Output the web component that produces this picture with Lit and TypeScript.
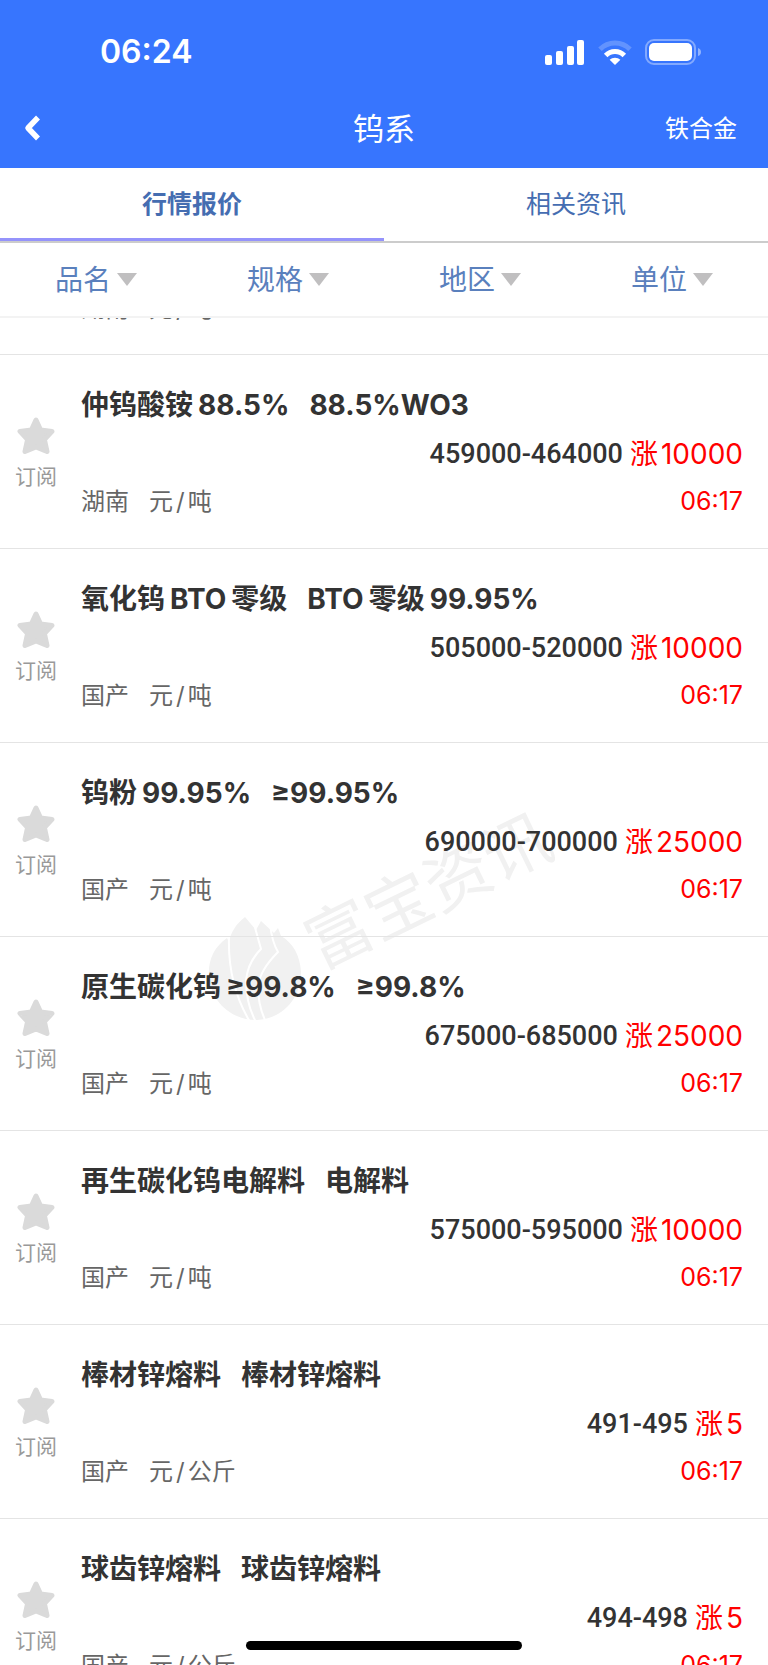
import { LitElement, html, svg, css } from "lit";
import { customElement, property } from "lit/decorators.js";

interface Quote {
  name: string[];
  spec: string[];
  price: string;
  amount: string;
  region: string;
  unit: string;
  time: string;
}

const quote = (name: string[], spec: string[], price: string, amount: string, region: string, unit: string): Quote =>
  ({ name, spec, price, amount, region, unit, time: "06:17" });

const QUOTES: Quote[] = [
  quote(["仲钨酸铵", "88.5%"], ["88.5%WO3"], "459000-464000", "10000", "湖南", "吨"),
  quote(["氧化钨", "BTO", "零级"], ["BTO", "零级", "99.95%"], "505000-520000", "10000", "国产", "吨"),
  quote(["钨粉", "99.95%"], ["≥99.95%"], "690000-700000", "25000", "国产", "吨"),
  quote(["原生碳化钨", "≥99.8%"], ["≥99.8%"], "675000-685000", "25000", "国产", "吨"),
  quote(["再生碳化钨电解料"], ["电解料"], "575000-595000", "10000", "国产", "吨"),
  quote(["棒材锌熔料"], ["棒材锌熔料"], "491-495", "5", "国产", "公斤"),
  quote(["球齿锌熔料"], ["球齿锌熔料"], "494-498", "5", "国产", "公斤"),
];

const metaStyles = css`
  .meta { display: flex; align-items: baseline; gap: 20px; font-size: 24px; line-height: 34px; color: #666; }
  .slash { margin: 0 3px; }
`;

const place = (region: string, unit: string) =>
  html`<span>${region}</span><span>元<span class="slash">/</span>${unit}</span>`;

@customElement("quote-row")
export class QuoteRow extends LitElement {
  @property({ attribute: false }) item!: Quote;

  static styles = [metaStyles, css`
    :host { display: flex; box-sizing: border-box; height: 194px; border-bottom: 1px solid #e4e4e4; }
    .subscribe {
      flex: none; width: 72px; margin: 0; padding: 62px 0 0; border: 0; background: none;
      display: flex; flex-direction: column; align-items: center; gap: 8px;
      font: inherit; font-size: 21px; line-height: 28px; color: #999;
    }
    .star { width: 38px; height: 38px; display: block; }
    .body { flex: 1; min-width: 0; margin: 0 25px 0 9px; padding-top: 33px; }
    .title {
      margin: 0; display: flex; gap: 20px; font-size: 28px; line-height: 34px; font-weight: 700; color: #333;
      white-space: nowrap;
    }
    .part { display: flex; gap: 5px; }
    .price {
      display: flex; justify-content: flex-end; align-items: center; gap: 7px; margin: 15px 0 13px;
      font-size: 28px; line-height: 34px; color: #333;
    }
    .value { font-family: "Roboto", "Noto Sans CJK SC", sans-serif; font-size: 27px; font-weight: 500; }
    .change { display: flex; gap: 3px; color: #f00; }
    .time { margin-left: auto; color: #f00; font-size: 25px; }
  `];

  render() {
    const q = this.item;
    return html`
      <button class="subscribe" type="button">
        <svg class="star" viewBox="0 0 38 38" aria-hidden="true">
          <path d="M19 3 L23.6 13 L35 14.4 L27.4 22.6 L30 34.5 L19 30 L8 34.5 L10.6 22.6 L3 14.4 L14.4 13 Z"
            fill="#dadada" stroke="#dadada" stroke-width="5" stroke-linejoin="round"/>
        </svg>
        <span>订阅</span>
      </button>
      <div class="body">
        <h2 class="title">
          <span class="part">${q.name.map((t) => html`<span>${t}</span>`)}</span>
          <span class="part">${q.spec.map((t) => html`<span>${t}</span>`)}</span>
        </h2>
        <div class="price">
          <span class="value">${q.price}</span>
          <span class="change"><span>涨</span><span>${q.amount}</span></span>
        </div>
        <div class="meta">${place(q.region, q.unit)}<time class="time">${q.time}</time></div>
      </div>`;
  }
}

const signalIcon = svg`<svg class="signal" width="39" height="25" viewBox="0 0 39 25" fill="#fff" aria-hidden="true">
  <rect x="0" y="15" width="7" height="10" rx="2"/><rect x="11" y="11" width="7" height="14" rx="2"/>
  <rect x="22" y="6" width="7" height="19" rx="2"/><rect x="32" y="0" width="7" height="25" rx="2"/></svg>`;

const wifiIcon = svg`<svg class="wifi" width="34" height="25" viewBox="0 0 34 25" aria-hidden="true">
  <path d="M2 9.2 A21 21 0 0 1 32 9.2" fill="none" stroke="#fff" stroke-opacity=".22" stroke-width="5"/>
  <path d="M7.7 15.4 A13 13 0 0 1 26.3 15.4" fill="none" stroke="#fff" stroke-width="5"/>
  <path d="M17 25 L11.6 19.8 A7.8 7.8 0 0 1 22.4 19.8 Z" fill="#fff"/></svg>`;

const batteryIcon = svg`<svg class="battery" width="56" height="26" viewBox="0 0 56 26" aria-hidden="true">
  <rect x="1" y="1" width="49" height="24" rx="8" fill="none" stroke="#fff" stroke-opacity=".38" stroke-width="2"/>
  <rect x="4" y="4" width="43" height="18" rx="5" fill="#fff"/>
  <path d="M53 9 Q56 10 56 13 Q56 16 53 17 Z" fill="#fff" fill-opacity=".45"/></svg>`;

@customElement("app-root")
export class AppRoot extends LitElement {
  static styles = [metaStyles, css`
    :host {
      display: flex; flex-direction: column; position: relative; isolation: isolate; height: 100vh; overflow: hidden;
      background: #fff; font-family: "Inter", "Noto Sans CJK SC", sans-serif;
    }
    button { font: inherit; border: 0; margin: 0; padding: 0; background: none; }
    .top { flex: none; background: #3775fe; color: #fff; }
    .status { display: flex; align-items: center; height: 88px; padding: 16px 67px 0 100px; box-sizing: border-box; }
    .clock { flex: 1; font-size: 32px; font-weight: 600; line-height: 40px; }
    .signal { margin-right: 14px; }
    .wifi { margin-right: 13px; }
    .nav { display: grid; grid-template-columns: 1fr auto 1fr; align-items: center; height: 80px; padding: 0 24px; box-sizing: border-box; }
    .back { justify-self: start; display: flex; }
    .heading { margin: 0; padding-top: 2px; font-size: 31px; line-height: 40px; font-weight: 400; }
    .link { justify-self: end; padding: 2px 7px 0 0; color: inherit; text-decoration: none; font-size: 24px; line-height: 36px; }
    .tabs { flex: none; display: flex; height: 75px; box-sizing: border-box; border-bottom: 2px solid #ccc; }
    .tab { flex: 1; padding-top: 2px; color: #456db1; font-size: 25px; line-height: 36px; border-bottom: 3px solid transparent; }
    .tab.active { font-weight: 700; border-bottom-color: #9593fb; }
    .filters { flex: none; display: flex; height: 75px; box-sizing: border-box; border-bottom: 2px solid #f3f3f3; }
    .filter { flex: 1; display: flex; align-items: center; justify-content: center; gap: 6px; color: #5a80bd; font-size: 28px; line-height: 40px; }
    .view { flex: 1; min-height: 0; overflow: hidden; }
    .tail {
      display: flex; align-items: flex-end; box-sizing: border-box; height: 37px; padding: 0 25px 28px 81px;
      overflow: hidden; border-bottom: 1px solid #e4e4e4;
    }
    .mark { position: absolute; z-index: -1; left: 50%; top: 800px; width: 380px; height: 240px; margin-left: -194px; }
    .mark-text { font-family: "Noto Sans CJK SC", sans-serif; font-size: 66px; font-weight: 400; }
    .home { position: absolute; left: 50%; bottom: 15px; width: 36%; height: 9px; margin-left: -18%; border-radius: 5px; background: #000; }
  `];

  render() {
    return html`
      <header class="top">
        <div class="status"><span class="clock">06:24</span>${signalIcon}${wifiIcon}${batteryIcon}</div>
        <nav class="nav">
          <button class="back" type="button" aria-label="返回">
            <svg width="18" height="26" viewBox="0 0 18 26" aria-hidden="true"><path d="M14 2.5 L4 13 L14 23.5" fill="none" stroke="#fff" stroke-width="5.5" stroke-linejoin="round"/></svg>
          </button>
          <h1 class="heading">钨系</h1>
          <a class="link" href="#">铁合金</a>
        </nav>
      </header>
      <div class="tabs">
        <button class="tab active" type="button">行情报价</button>
        <button class="tab" type="button">相关资讯</button>
      </div>
      <div class="filters">
        ${["品名", "规格", "地区", "单位"].map((f) => html`<button class="filter" type="button">${f}<svg width="20" height="13" viewBox="0 0 20 13" aria-hidden="true"><path d="M0 0H20L10 13Z" fill="#c0bfc0"/></svg></button>`)}
      </div>
      <main class="view">
        <div class="tail"><div class="meta">${place("湖南", "吨")}</div></div>
        ${QUOTES.map((q) => html`<quote-row .item=${q}></quote-row>`)}
      </main>
      <svg class="mark" viewBox="0 0 380 240" fill="#f1f1f1" aria-hidden="true">
        <path d="M37 138 C24 147 18 160 19 176 C21 202 41 220 67 220 C92 219 111 199 111 172 C110 155 103 143 91 136 L88 128 L84 133 L71 121 L66 130 L55 117 C46 124 41 132 39 142 Z"/>
        <path d="M39 136 C38 165 44 195 60 222 M64 124 L71 149 Q58 162 56 180 Q56 204 66 222 M80 124 Q82 142 88 152 Q70 170 68 186 Q68 206 76 222"
          fill="none" stroke="#fff" stroke-width="2"/>
        <text class="mark-text" transform="translate(130 170) rotate(-26)">富宝资讯</text>
      </svg>
      <div class="home"></div>`;
  }
}
